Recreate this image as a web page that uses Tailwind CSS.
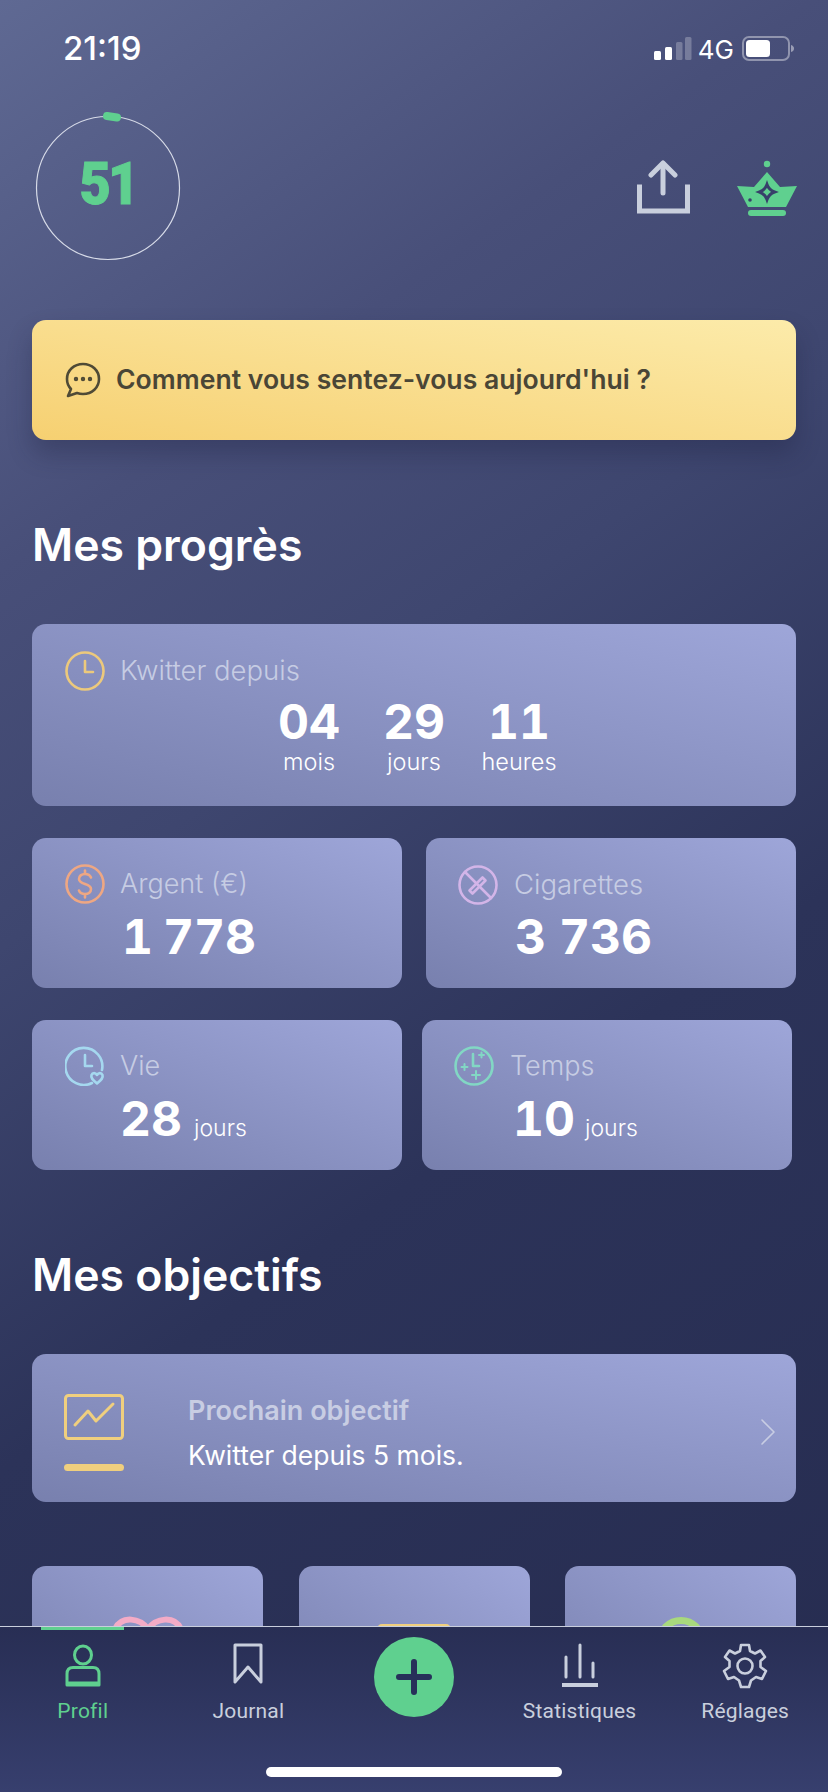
<!DOCTYPE html>
<html lang="fr">
<head>
    <meta charset="UTF-8">
    <meta name="viewport" content="width=device-width, initial-scale=1.0">
    <title>Kwit</title>
    <script src="https://cdn.jsdelivr.net/npm/@tailwindcss/browser@4"></script>
</head>
<body class="font-['Inter',sans-serif]">
    <div class="relative w-[828px] h-[1792px] overflow-hidden bg-[linear-gradient(145deg,#5f6993_0%,#484f79_24%,#3e466f_40%,#2c3359_62%,#262c50_100%)] text-white">

        <!-- Status bar -->
        <div class="flex justify-between items-center h-[50px] mt-[24px] pl-[63px] pr-[33px]">
            <span class="text-[33px] font-medium">21:19</span>
            <div class="flex items-center">
                <svg width="38" height="24" viewBox="0 0 38 24" fill="#fff">
                    <rect x="0" y="14" width="7" height="9" rx="1.5"/>
                    <rect x="11" y="10" width="7" height="13" rx="1.5"/>
                    <rect x="22" y="5" width="6.5" height="18" rx="1.5" fill-opacity=".25"/>
                    <rect x="31" y="0" width="6.5" height="23" rx="1.5" fill-opacity=".25"/>
                </svg>
                <span class="text-[26px] ml-[6px] mr-[8px]">4G</span>
                <svg width="53" height="26" viewBox="0 0 53 26" fill="none">
                    <rect x="1" y="1" width="46" height="23" rx="6" stroke="#fff" stroke-opacity=".4" stroke-width="2"/>
                    <rect x="4" y="4" width="24" height="17" rx="3.5" fill="#fff"/>
                    <path d="M49 9 q3 1 3 3.5 t-3 3.5z" fill="#fff" fill-opacity=".45"/>
                </svg>
            </div>
        </div>

        <!-- Score + actions -->
        <div class="flex justify-between items-start pl-[33px] pr-[31px] mt-[34px]">
            <div class="relative w-[150px] h-[154px]">
                <svg width="150" height="154" viewBox="0 0 150 154" fill="none">
                    <circle cx="75" cy="80" r="71.5" stroke="#d7dbe8" stroke-width="1.2"/>
                    <path d="M74 8 L84 9.5" stroke="#5fd08f" stroke-width="8" stroke-linecap="round"/>
                </svg>
                <div class="absolute inset-0 pb-[2px] flex items-center justify-center font-['Roboto',sans-serif] font-black text-[60px] tracking-[-3px] scale-x-90 [-webkit-text-stroke:1px_#5fd08f] text-[#5fd08f]">51</div>
            </div>
            <div class="flex items-start mt-[52px]">
                <svg class="mr-[47px]" width="54" height="54" viewBox="0 0 54 54" fill="none" stroke="#c9cfdd" stroke-width="5" stroke-linecap="round" stroke-linejoin="round">
                    <path d="M27 4 V33"/>
                    <path d="M15 15 L27 3 L39 15"/>
                    <path d="M3.5 27 V51 H51.5 V27" stroke-linecap="square" stroke-linejoin="miter"/>
                </svg>
                <svg width="60" height="58" viewBox="0 0 60 58">
                    <circle cx="30" cy="4" r="3.2" fill="#5fd08f"/>
                    <path d="M30 12 L43 27 L60 26 L49 47 H11 L0 26 L17 27 Z" fill="#5fd08f"/>
                    <rect x="11" y="50" width="38" height="6" rx="3" fill="#5fd08f"/>
                    <path d="M30 24.500 Q32 30 37.500 32 Q32 34 30 39.500 Q28 34 22.500 32 Q28 30 30 24.500Z" fill="none" stroke="#37406a" stroke-width="3"/>
                    <circle cx="13" cy="40" r="1.8" fill="#37406a"/>
                </svg>
            </div>
        </div>

        <!-- Mood banner -->
        <div class="mx-[32px] mt-[58px] h-[120px] rounded-[14px] bg-linear-to-tr from-[#f6d071] to-[#fcebaa] shadow-[0_14px_24px_rgba(25,30,60,0.3)] flex items-center pl-[33px]">
            <svg width="36" height="36" viewBox="0 0 36 36" fill="none" stroke="#4f4a36" stroke-width="2.6" stroke-linecap="round" stroke-linejoin="round">
                <path d="M18 2 C9 2 2 8.5 2 17 C2 21 3.5 24.5 6 27 L3 34 L12 31 C14 31.700 16 32 18 32 C27 32 34 25.500 34 17 C34 8.500 27 2 18 2Z"/>
                <circle cx="11" cy="17" r=".9" fill="#4f4a36"/>
                <circle cx="18" cy="17" r=".9" fill="#4f4a36"/>
                <circle cx="25" cy="17" r=".9" fill="#4f4a36"/>
            </svg>
            <span class="ml-[15px] text-[26.6px] font-semibold text-[#4a4636]">Comment vous sentez-vous aujourd'hui ?</span>
        </div>

        <!-- Mes progrès -->
        <h2 class="ml-[32px] mt-[77px] text-[44.600px] leading-[56px] font-semibold">Mes progrès</h2>

        <div class="mx-[32px] mt-[51px] h-[182px] rounded-[14px] bg-linear-to-tr from-[#7880ae] to-[#9ea6d9] pl-[33px] pt-[26px]">
            <div class="flex items-center">
                <svg width="40" height="40" viewBox="0 0 40 40" fill="none" stroke="#ecc97c" stroke-width="2.6" stroke-linecap="round" stroke-linejoin="round">
                    <circle cx="20" cy="20" r="18.500"/>
                    <path d="M20 10 V21 H28"/>
                </svg>
                <span class="ml-[15px] text-[27.500px] font-light text-[#c6cce3]">Kwitter depuis</span>
            </div>
            <div class="flex justify-center -ml-[33px] mt-[5px] tabular-nums">
                <div class="w-[105px] flex flex-col items-center">
                    <span class="font-bold text-[48px] leading-[52px]">04</span>
                    <span class="text-[23.500px] leading-[28px] font-light">mois</span>
                </div>
                <div class="w-[105px] flex flex-col items-center">
                    <span class="font-bold text-[48px] leading-[52px]">29</span>
                    <span class="text-[23.500px] leading-[28px] font-light">jours</span>
                </div>
                <div class="w-[105px] flex flex-col items-center">
                    <span class="font-bold text-[48px] leading-[52px]">11</span>
                    <span class="text-[23.500px] leading-[28px] font-light">heures</span>
                </div>
            </div>
        </div>

        <div class="flex justify-between mx-[32px] mt-[32px]">
            <div class="w-[370px] h-[150px] rounded-[14px] bg-linear-to-tr from-[#7880ae] to-[#9ea6d9] pl-[33px] pt-[26px]">
                <div class="flex items-center">
                    <svg width="40" height="40" viewBox="0 0 40 40" fill="none" stroke="#eea783" stroke-width="2.6" stroke-linecap="round" stroke-linejoin="round">
                        <circle cx="20" cy="20" r="18.500"/>
                        <path d="M26 13.500 C25 11 23 10 20 10 C16.500 10 14 12 14 15 C14 21 26 19 26 25 C26 28 23.500 30 20 30 C17 30 15 29 14 26.500 M20 6.500 V10 M20 30 V33.500"/>
                    </svg>
                    <span class="ml-[15px] text-[27px] font-light text-[#c6cce3]">Argent (€)</span>
                </div>
                <div class="ml-[57px] font-bold text-[48px] leading-[52px] mt-[6px] tabular-nums [word-spacing:-3px]">1 778</div>
            </div>
            <div class="w-[370px] h-[150px] rounded-[14px] bg-linear-to-tr from-[#7880ae] to-[#9ea6d9] pl-[32px] pt-[26px]">
                <div class="flex items-center">
                    <svg width="40" height="40" viewBox="0 0 40 40" fill="none" stroke="#d3b5e8" stroke-width="2.600" stroke-linecap="round" stroke-linejoin="round">
                        <circle cx="20" cy="20" r="18.500"/>
                        <path d="M7 7 L33 33"/>
                        <path d="M11.500 25.500 L24.500 12.500 L27.500 15.500 L14.500 28.500Z"/>
                    </svg>
                    <span class="ml-[16px] text-[27.500px] font-light text-[#c6cce3]">Cigarettes</span>
                </div>
                <div class="ml-[57px] font-bold text-[48px] leading-[52px] mt-[6px] tabular-nums">3 736</div>
            </div>
        </div>

        <div class="flex justify-between ml-[32px] mr-[36px] mt-[32px]">
            <div class="w-[370px] h-[150px] rounded-[14px] bg-linear-to-tr from-[#7880ae] to-[#9ea6d9] pl-[33px] pt-[26px]">
                <div class="flex items-center">
                    <svg width="40" height="40" viewBox="0 0 40 40" fill="none" stroke="#a5d8ef" stroke-width="2.600" stroke-linecap="round" stroke-linejoin="round">
                        <path d="M37 24 A18.500 18.500 0 1 0 27 37"/>
                        <path d="M20 9 V20 H27"/>
                        <path d="M32 37.500 C28 34 25.500 32 26.500 29 C27.500 26.500 30.500 26.500 32 29 C33.500 26.500 36.500 26.500 37.500 29 C38.500 32 36 34 32 37.500Z"/>
                    </svg>
                    <span class="ml-[15px] text-[27px] font-light text-[#c6cce3]">Vie</span>
                </div>
                <div class="ml-[55px] flex items-baseline mt-[6px] tabular-nums">
                    <span class="font-bold text-[48px] leading-[52px]">28</span>
                    <span class="ml-[12px] text-[23px] font-light">jours</span>
                </div>
            </div>
            <div class="w-[370px] h-[150px] rounded-[14px] bg-linear-to-tr from-[#7880ae] to-[#9ea6d9] pl-[32px] pt-[26px]">
                <div class="flex items-center">
                    <svg width="40" height="40" viewBox="0 0 40 40" fill="none" stroke="#82d7c4" stroke-width="2.600" stroke-linecap="round" stroke-linejoin="round">
                        <circle cx="20" cy="20" r="18.500"/>
                        <path d="M19 8 V20 H25"/>
                        <path d="M7.500 21 H13.500 M10.500 18 V24 M25 9 H30 M27.500 6.500 V11.500 M18 29 H26 M22 25 V33" stroke-width="2"/>
                    </svg>
                    <span class="ml-[16px] text-[27px] font-light text-[#c6cce3]">Temps</span>
                </div>
                <div class="ml-[59px] flex items-baseline mt-[6px] tabular-nums">
                    <span class="font-bold text-[48px] leading-[52px]">10</span>
                    <span class="ml-[10px] text-[23px] font-light">jours</span>
                </div>
            </div>
        </div>

        <!-- Mes objectifs -->
        <h2 class="ml-[32px] mt-[77px] text-[44.600px] leading-[56px] font-semibold">Mes objectifs</h2>

        <div class="mx-[32px] mt-[51px] h-[148px] rounded-[14px] bg-linear-to-tr from-[#7880ae] to-[#9ea6d9] flex items-center pl-[32px] pr-[20px] pt-[8px]">
            <div class="w-[60px] mr-[64px] flex flex-col">
                <svg width="60" height="46" viewBox="0 0 60 46" fill="none" stroke="#f0cf7e" stroke-width="3" stroke-linecap="round" stroke-linejoin="round">
                    <rect x="1.500" y="1.500" width="57" height="43" rx="3"/>
                    <path d="M11 31 L24 17 L32 27 L49 10"/>
                </svg>
                <div class="h-[7px] mt-[24px] rounded-full bg-[#f0cf7e]"></div>
            </div>
            <div class="flex-1 mt-[2px]">
                <div class="text-[27px] leading-[34px] font-semibold text-[#c8cde3]">Prochain objectif</div>
                <div class="text-[26.500px] leading-[34px] mt-[10px]">Kwitter depuis 5 mois.</div>
            </div>
            <svg width="16" height="26" viewBox="0 0 16 26" fill="none" stroke="#c8cde3" stroke-width="1.600" stroke-linecap="round" stroke-linejoin="round"><path d="M2 1 L14 13 L2 25"/></svg>
        </div>

        <div class="flex justify-between mx-[32px] mt-[64px]">
            <div class="w-[231px] h-[160px] rounded-[14px] bg-linear-to-tr from-[#7880ae] to-[#9ea6d9] flex justify-center pt-[49px]">
                <svg width="76" height="60" viewBox="0 0 76 60" fill="none" stroke="#f3abc6" stroke-width="6">
                    <path d="M38 14 C30 3 12 0 5 14 C0 30 20 48 38 58 C56 48 76 30 71 14 C64 0 46 3 38 14Z"/>
                </svg>
            </div>
            <div class="w-[231px] h-[160px] rounded-[14px] bg-linear-to-tr from-[#7880ae] to-[#9ea6d9] flex justify-center pt-[58px]">
                <div class="w-[74px] h-[50px] rounded-[5px] border-[5px] border-[#f0cf7e]"></div>
            </div>
            <div class="w-[231px] h-[160px] rounded-[14px] bg-linear-to-tr from-[#7880ae] to-[#9ea6d9] flex justify-center pt-[51px]">
                <div class="w-[50px] h-[50px] rounded-full border-[7px] border-[#a8d97d]"></div>
            </div>
        </div>

        <!-- Bottom nav -->
        <div class="absolute left-0 right-0 bottom-0 h-[166px] bg-linear-to-b from-[#282e54] to-[#373f6e] border-t border-[#c9cfdd]">
            <div class="absolute left-[41px] top-0 w-[83px] h-[3px] bg-[#5fd08f]"></div>
            <div class="grid grid-cols-5 pt-[16px] font-['Roboto',sans-serif] text-[21px] tracking-[0.2px] text-[#c9cfdd]">
                <div class="flex flex-col items-center text-[#5fd08f]">
                    <svg width="38" height="44" viewBox="0 0 38 44" fill="none" stroke="#5fd08f" stroke-width="3" stroke-linejoin="round">
                        <ellipse cx="19" cy="12" rx="8.500" ry="9"/>
                        <path d="M3 42 V31 C3 27 5 24.500 9 24.500 H29 C33 24.500 35 27 35 31 V42 Z"/>
                        <path d="M3 40 H35"/>
                    </svg>
                    <span class="mt-[11px] leading-[26px]">Profil</span>
                </div>
                <div class="flex flex-col items-center">
                    <svg width="30" height="42" viewBox="0 0 30 42" fill="none" stroke="#c9cfdd" stroke-width="3" stroke-linejoin="round">
                        <path d="M2 2 H28 V39 L15 24 L2 39Z"/>
                    </svg>
                    <span class="mt-[13px] leading-[26px]">Journal</span>
                </div>
                <div class="flex justify-center -mt-[6px]">
                    <div class="w-[80px] h-[80px] rounded-full bg-[#5fd08f] flex items-center justify-center">
                        <svg width="36" height="36" viewBox="0 0 36 36" stroke="#27305a" stroke-width="6" stroke-linecap="round"><path d="M18 3 V33 M3 18 H33"/></svg>
                    </div>
                </div>
                <div class="flex flex-col items-center">
                    <svg width="40" height="44" viewBox="0 0 40 44" fill="none" stroke="#c9cfdd" stroke-width="3" stroke-linecap="round">
                        <path d="M6 14 V34 M20 2 V34 M33 20 V34"/>
                        <path d="M2 42 H38" stroke-width="4" stroke-linecap="butt"/>
                    </svg>
                    <span class="mt-[11px] leading-[26px]">Statistiques</span>
                </div>
                <div class="flex flex-col items-center">
                    <svg width="46" height="46" viewBox="0 0 46 46" fill="none" stroke="#c9cfdd" stroke-width="2.600" stroke-linejoin="round">
                        <circle cx="23" cy="23" r="7.500"/>
                        <path d="M19 2 H27 L28 8 L33 10.500 L38.500 7.500 L43 14 L38.500 18 V24 L44 28 L40 36 L34 34 L29 37.500 L27 44 H19 L17 37.500 L12 34 L6 36 L2 28 L7.500 24 V18 L3 14 L7.500 7.500 L13 10.500 L18 8Z"/>
                    </svg>
                    <span class="mt-[9px] leading-[26px]">Réglages</span>
                </div>
            </div>
            <div class="absolute left-[266px] top-[140px] w-[296px] h-[10px] rounded-full bg-white"></div>
        </div>
    </div>
</body>
</html>
